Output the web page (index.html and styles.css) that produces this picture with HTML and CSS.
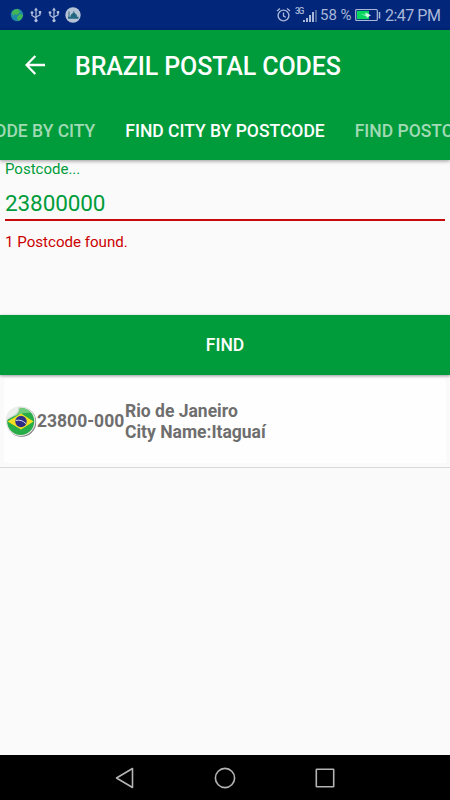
FILE: index.html
```
<!DOCTYPE html>
<html lang="en">

<head>
    <meta charset="UTF-8">
    <meta name="viewport" content="width=device-width, initial-scale=1.0">
    <title>Brazil Postal Codes</title>
    <link rel="stylesheet" href="styles.css">
</head>

<body>
    <div class="status">
        <div class="status-left">
            <svg class="globe" width="14" height="14" viewBox="0 0 14 14">
                <circle cx="7" cy="7" r="6.2" fill="#2089a8"/>
                <path d="M2 4Q4 1 8 1L10 4 7 7 5 6 3 8ZM7 9L10 6 13 7Q12 12 8 13Z" fill="#42b653"/>
            </svg>
            <svg class="usb" width="12" height="16" viewBox="0 0 12 16">
                <path d="M6 2V13M2 6V8.5L6 11M10 5.5V8L6 10" fill="none" stroke="#b5c0dc" stroke-width="1.2"/>
                <path d="M6 .5L8 3.5H4ZM8.8 4h2.4v2.4H8.8Z" fill="#b5c0dc"/>
                <circle cx="2" cy="5.6" r="1.4" fill="#b5c0dc"/>
                <circle cx="6" cy="13.6" r="1.6" fill="#b5c0dc"/>
            </svg>
            <svg class="usb" width="12" height="16" viewBox="0 0 12 16">
                <path d="M6 2V13M2 6V8.5L6 11M10 5.5V8L6 10" fill="none" stroke="#b5c0dc" stroke-width="1.2"/>
                <path d="M6 .5L8 3.5H4ZM8.8 4h2.4v2.4H8.8Z" fill="#b5c0dc"/>
                <circle cx="2" cy="5.6" r="1.4" fill="#b5c0dc"/>
                <circle cx="6" cy="13.6" r="1.6" fill="#b5c0dc"/>
            </svg>
            <svg class="mosque" width="16" height="16" viewBox="0 0 16 16">
                <circle cx="8" cy="8" r="7.7" fill="#b4c3d6"/>
                <path d="M3 11.8V9.8H5.5Q5.2 7.5 8.8 5.6Q12.4 7.5 12 9.8H13.5V11.8Z" fill="#246780"/>
                <path d="M4 4.5V11M8.8 4.2V6" stroke="#31667c" stroke-width=".9"/>
            </svg>
        </div>
        <div class="status-right">
            <svg class="alarm" width="15" height="16" viewBox="0 0 15 16">
                <circle cx="7.5" cy="8.5" r="5.4" fill="none" stroke="#a9b7d8" stroke-width="1.4"/>
                <path d="M7.5 5.5V9L9.8 10.3M1 4L4 1.5M14 4L11 1.5" fill="none" stroke="#a9b7d8" stroke-width="1.3"/>
            </svg>
            <span class="net">3G</span>
            <svg class="signal" width="14" height="13" viewBox="0 0 14 13">
                <path d="M0 10h2v2H0ZM3 8h2v4H3ZM6 5h2V12H6ZM9 2h2v10H9Z" fill="#a9b7d8"/>
                <path d="M12 0h2v12h-2Z" fill="#50689f"/>
            </svg>
            <span class="percent">58 %</span>
            <svg class="battery" width="26" height="14" viewBox="0 0 26 14">
                <rect x=".7" y="1.5" width="21.6" height="11" rx="1" fill="none" stroke="#a9b7d8" stroke-width="1.2"/>
                <path d="M2 2.800h12v8.400H2Z" fill="#08d65e"/>
                <path d="M6 6.5L10.5 6.8V4.5L16 7.3 11.5 10V7.9Z" fill="#d4f4e6"/>
                <path d="M24.5 4v6.5" stroke="#a9b7d8" stroke-width="1.5"/>
            </svg>
            <span class="clock">2:47 PM</span>
        </div>
    </div>

    <header>
        <div class="toolbar">
            <svg class="back" width="20" height="20" viewBox="0 0 20 20">
                <path d="M20 10H1.8M10.3 1L1.5 10l8.800 9" fill="none" stroke="#fff" stroke-width="2.3"/>
            </svg>
            <h1>BRAZIL POSTAL CODES</h1>
        </div>
        <nav class="tabs">
            <span>FIND POSTCODE BY CITY</span>
            <span class="active">FIND CITY BY POSTCODE</span>
            <span>FIND POSTCODE BY ADDRESS</span>
        </nav>
    </header>

    <main>
        <div class="field">
            <p class="label">Postcode...</p>
            <p class="value">23800000</p>
            <p class="message">1 Postcode found.</p>
        </div>
        <button class="find">FIND</button>
        <div class="result">
            <div class="card">
                <svg class="flag" width="33" height="34" viewBox="0 0 33 34">
                    <circle cx="17.5" cy="17" r="14.7" fill="#777"/>
                    <circle cx="16.7" cy="16.2" r="14.8" fill="#e4e6e3"/>
                    <circle cx="16.7" cy="16.4" r="13.5" fill="#27ad48"/>
                    <path d="M4 16Q13 12 15 3Q22 2 27 8Q17 6 4 16Z" fill="#70cc7b"/>
                    <path d="M1.8 16Q1 4 15.5 1Q15.5 7 12 10Q8 11.5 1.800 16Z" fill="#eceeec"/>
                    <path d="M3 14Q10 11 12 9Q15 6 15 2" fill="none" stroke="#cfd5cf" stroke-width="1"/>
                    <path d="M3.5 16.5L17 8.5 29.5 16.5 17 24.5Z" fill="#f4df22"/>
                    <circle cx="17" cy="16.5" r="5.700" fill="#302d87"/>
                    <path d="M11.8 15.500Q17.5 14 22 18.700" fill="none" stroke="#d8daf0" stroke-width="1"/>
                </svg>
                <span class="code">23800-000</span>
                <div class="place">
                    <p>Rio de Janeiro</p>
                    <p>City Name:Itaguaí</p>
                </div>
            </div>
        </div>
    </main>

    <footer>
        <svg width="20" height="22" viewBox="0 0 20 22">
            <path d="M1.5 11L17.5 1.5v19Z" fill="none" stroke="#b4b4b4" stroke-width="1.6" stroke-linejoin="round"/>
        </svg>
        <svg width="22" height="22" viewBox="0 0 22 22">
            <circle cx="11" cy="11" r="9.6" fill="none" stroke="#b4b4b4" stroke-width="1.6"/>
        </svg>
        <svg width="20" height="22" viewBox="0 0 20 22">
            <rect x="1.3" y="2.3" width="17.4" height="17.4" rx=".5" fill="none" stroke="#b4b4b4" stroke-width="1.6"/>
        </svg>
    </footer>
</body>

</html>
```
FILE: styles.css
```
*{
    margin: 0;
    padding: 0;
    box-sizing: border-box;
}
body{
    width: 450px;
    height: 800px;
    display: flex;
    flex-direction: column;
    overflow: hidden;
    background-color: #fafafa;
    font-family: Roboto, sans-serif;
}
svg{
    display: block;
    flex-shrink: 0;
}
.status{
    height: 30px;
    padding: 0 10px;
    display: flex;
    justify-content: space-between;
    align-items: center;
    background-color: #01267a;
    color: #a9b7d8;
}
.status-left, .status-right{
    display: flex;
    align-items: center;
    white-space: nowrap;
}
.usb{
    margin-left: 6px;
}
.mosque{
    margin-left: 5px;
}
.status-right{
    height: 30px;
}
.net{
    align-self: flex-start;
    margin: 7px 0 0 4px;
    width: 8px;
    font-size: 8.5px;
    line-height: 9px;
    font-weight: 500;
    letter-spacing: -1.3px;
}
.signal{
    margin-top: 2px;
}
.percent{
    margin-left: 3px;
    width: 31px;
    font-size: 15px;
}
.battery{
    margin-left: 4px;
}
.clock{
    margin-left: 4px;
    width: 55px;
    font-size: 16px;
    letter-spacing: -0.5px;
}
header{
    position: relative;
    height: 130px;
    background-color: #009c3b;
    color: white;
    box-shadow: 0 1px 4px rgba(0,0,0,0.4);
}
.toolbar{
    height: 70px;
    padding-left: 25px;
    display: flex;
    align-items: center;
    gap: 30px;
}
h1{
    padding-top: 2px;
    font-size: 25px;
    font-weight: 500;
    letter-spacing: -0.1px;
    white-space: nowrap;
}
.tabs{
    height: 60px;
    padding-top: 1px;
    display: flex;
    align-items: center;
    gap: 30px;
    overflow: hidden;
    white-space: nowrap;
    font-size: 17.5px;
    font-weight: 500;
}
.tabs span{
    flex: 1 1 0;
    min-width: 0;
    color: #a1dab5;
}
.tabs span:first-child{
    display: flex;
    justify-content: flex-end;
}
.tabs .active{
    flex: none;
    color: white;
}
main{
    flex: 1;
}
.field{
    height: 155px;
    padding: 0 5px;
    color: #009c3b;
}
.label{
    font-size: 15px;
    line-height: 18px;
}
.value{
    height: 43px;
    padding-top: 11px;
    border-bottom: 2px solid #c90a0a;
    font-size: 22.5px;
    line-height: 28px;
    letter-spacing: -0.1px;
}
.message{
    margin-top: 12px;
    font-size: 15.1px;
    line-height: 18px;
    color: #cc0000;
}
.find{
    position: relative;
    display: block;
    width: 100%;
    height: 60px;
    border: none;
    background-color: #009c3b;
    box-shadow: 0 1px 3px rgba(0,0,0,0.4);
    color: white;
    font-family: inherit;
    font-size: 17.5px;
    font-weight: 500;
}
.result{
    height: 93px;
    padding: 3px 4px 4px;
    border-bottom: 1px solid #d9d9d9;
}
.card{
    height: 85px;
    padding-top: 2px;
    display: flex;
    align-items: center;
    background-color: #fefefe;
    color: #6e6e6e;
    font-size: 17.5px;
    font-weight: 700;
    line-height: 20.5px;
}
.code{
    width: 88px;
    white-space: nowrap;
}
footer{
    height: 45px;
    padding: 0 115px;
    display: flex;
    justify-content: space-between;
    align-items: center;
    background-color: black;
}
```
